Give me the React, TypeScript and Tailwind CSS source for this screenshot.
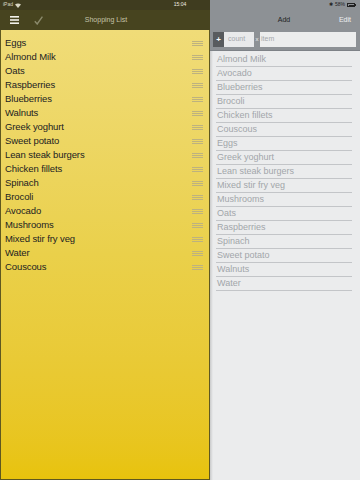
import React from 'react';

const shopping = [
  'Eggs', 'Almond Milk', 'Oats', 'Raspberries', 'Blueberries', 'Walnuts', 'Greek yoghurt',
  'Sweet potato', 'Lean steak burgers', 'Chicken fillets', 'Spinach', 'Brocoli', 'Avocado',
  'Mushrooms', 'Mixed stir fry veg', 'Water', 'Couscous',
];

const catalogue = [
  'Almond Milk', 'Avocado', 'Blueberries', 'Brocoli', 'Chicken fillets', 'Couscous', 'Eggs',
  'Greek yoghurt', 'Lean steak burgers', 'Mixed stir fry veg', 'Mushrooms', 'Oats',
  'Raspberries', 'Spinach', 'Sweet potato', 'Walnuts', 'Water',
];

function Handle() {
  return (
    <div className="flex flex-col gap-[1px] w-[11px]">
      <div className="h-[1px] bg-[#bdb27f]" />
      <div className="h-[1px] bg-[#bdb27f]" />
      <div className="h-[1px] bg-[#bdb27f]" />
    </div>
  );
}

export default function App() {
  return (
    <div className="relative w-[360px] h-[480px] flex overflow-hidden font-['Liberation_Sans',Arial,sans-serif]">
      {/* clock sits across both status bars */}
      <span className="absolute top-0 left-0 right-0 h-[10px] flex items-center justify-center text-[5px] text-[#f0efe4] pointer-events-none">15:04</span>

      {/* shopping list */}
      <div className="w-[210px] flex flex-col">
        <div className="h-[10px] bg-[#3f3c1f] flex items-center px-[3px] text-[5px] text-[#d8d6c4] gap-[2px]">
          <span>iPad</span>
          <svg width="6" height="5" viewBox="0 0 6 5"><path d="M3 5L0 1.5Q3 -0.5 6 1.5Z" fill="#d8d6c4" /></svg>
        </div>
        <div className="h-[20px] bg-[#47441f] flex items-center relative">
          <svg className="ml-[10px]" width="9" height="8" viewBox="0 0 9 8">
            <rect y="0" width="9" height="1.6" fill="#f2f2ea" />
            <rect y="3.2" width="9" height="1.6" fill="#f2f2ea" />
            <rect y="6.4" width="9" height="1.6" fill="#f2f2ea" />
          </svg>
          <svg className="ml-[15px]" width="9" height="9" viewBox="0 0 9 9">
            <path d="M0.8 5.2L3.2 8L8.4 0.6" stroke="#8b8a6c" strokeWidth="1.4" fill="none" />
          </svg>
          <span className="absolute left-0 right-0 text-center text-[7px] text-[#c4c3a8] pointer-events-none pl-[2px]">Shopping List</span>
        </div>
        <div className="flex-1 bg-gradient-to-b from-[#f0dc78] via-[#ead04a] to-[#e8c30c] border-x border-b border-[#5f5820] pt-[6px]">
          {shopping.map((s) => (
            <div key={s} className="h-[14px] flex items-center pl-[4px] pr-[6px]">
              <span className="text-[9.5px] text-[#222] tracking-[-0.1px]">{s}</span>
              <div className="ml-auto">
                <Handle />
              </div>
            </div>
          ))}
        </div>
      </div>

      {/* add panel */}
      <div className="flex-1 flex flex-col bg-[#ebeced]">
        <div className="h-[10px] bg-[#8d9195] flex items-center justify-end pr-[4px] gap-[2px] text-[5px] text-[#222]">
          <span className="text-[5px]">✱</span>
          <span>58%</span>
          <div className="flex items-center">
            <div className="w-[8px] h-[4px] border border-[#222] p-[0.5px]"><div className="w-[5px] h-full bg-[#222]" /></div>
            <div className="w-[1px] h-[2px] bg-[#222]" />
          </div>
        </div>
        <div className="h-[20px] bg-[#8d9195] flex items-center relative">
          <span className="absolute left-0 right-0 text-center text-[7px] text-[#1d1f22] pr-[2px]">Add</span>
          <span className="ml-auto mr-[9px] text-[7px] text-[#eef0f2]">Edit</span>
        </div>
        <div className="h-[21px] bg-[#8d9195] flex items-center pl-[3px] pr-[4px] pb-[1px] border-b border-[#7e8287]">
          <div className="w-[11px] h-[15px] bg-[#585b5e] flex items-center justify-center text-[8px] text-white font-bold">+</div>
          <div className="w-[30px] h-[15px] bg-[#e9eaeb] text-[7px] text-[#a5a8ab] flex items-center pl-[4px]">count</div>
          <span className="w-[6px] text-center text-[6px] text-[#eef0f2]">x</span>
          <div className="flex-1 h-[15px] bg-[#eceded] text-[7px] text-[#a5a8ab] flex items-center pl-[1px]">item</div>
        </div>
        <div className="flex-1 flex">
          <div className="w-[3px] bg-gradient-to-r from-[#c9cacb] to-[#ebeced]" />
          <div className="flex-1 pt-[2px] pl-[3px] pr-[8px]">
            {catalogue.map((c) => (
              <div key={c} className="h-[14px] flex items-center border-b border-[#c3c5c8] pl-[1px]">
                <span className="text-[9px] text-[#a2a6aa]">{c}</span>
              </div>
            ))}
          </div>
        </div>
      </div>
    </div>
  );
}
